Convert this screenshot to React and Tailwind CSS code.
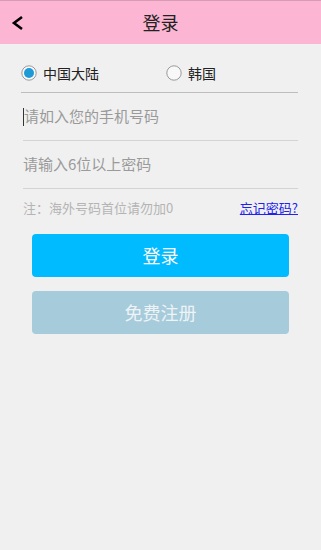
const font = { fontFamily: '"Noto Sans CJK SC", "Noto Sans", sans-serif' };

const Radio = ({ checked }) => (
  <svg width="16" height="16" viewBox="0 0 16 16" className="shrink-0">
    <circle cx="8" cy="8" r="7.2" fill="#f8f8f8" stroke="#9a9a9a" strokeWidth="1" />
    {checked && <circle cx="8" cy="8" r="5" fill="#1e9ad6" />}
  </svg>
);

export default function App() {
  return (
    <div className="w-[321px] h-[550px] bg-[#f0f0f0] flex flex-col" style={font}>
      <div className="h-[44px] bg-[#fcb6d3] border-t border-[#d89bb4] flex items-center relative">
        <svg width="14" height="16" viewBox="0 0 14 16" className="ml-[11px]">
          <path d="M11 2 L3 8 L11 14" fill="none" stroke="#000" strokeWidth="2.6" />
        </svg>
        <div className="absolute inset-0 flex items-center justify-center text-[18px] text-[#222]">登录</div>
      </div>

      <div className="px-[23px] flex flex-col">
        <div className="h-[49px] flex items-center border-b border-[#bdbdbd] pt-[14px] pb-[4px] -ml-[2px]">
          <div className="flex items-center gap-[6px] w-[145px]">
            <Radio checked />
            <span className="text-[14px] text-[#222]">中国大陆</span>
          </div>
          <div className="flex items-center gap-[6px]">
            <Radio />
            <span className="text-[14px] text-[#222]">韩国</span>
          </div>
        </div>
        <div className="h-[48px] flex items-center border-b border-[#d4d4d4]">
          <span className="w-[1px] h-[18px] bg-[#333]" />
          <span className="text-[15px] text-[#9a9a9a]">请如入您的手机号码</span>
        </div>
        <div className="h-[48px] flex items-center border-b border-[#d4d4d4]">
          <span className="text-[15px] text-[#9a9a9a]">请输入6位以上密码</span>
        </div>
        <div className="h-[37px] flex items-center justify-between">
          <span className="text-[13px] text-[#b4b4b4]">注：海外号码首位请勿加0</span>
          <span className="text-[13px] text-[#2222ee] underline">忘记密码?</span>
        </div>
      </div>

      <div className="px-[32px] mt-[8px] flex flex-col gap-[14px]">
        <div className="h-[43px] rounded-[4px] bg-[#00bbff] flex items-center justify-center text-[18px] text-white">登录</div>
        <div className="h-[43px] rounded-[4px] bg-[#a6cbdb] flex items-center justify-center text-[18px] text-[#eef3f6]">免费注册</div>
      </div>
    </div>
  );
}
